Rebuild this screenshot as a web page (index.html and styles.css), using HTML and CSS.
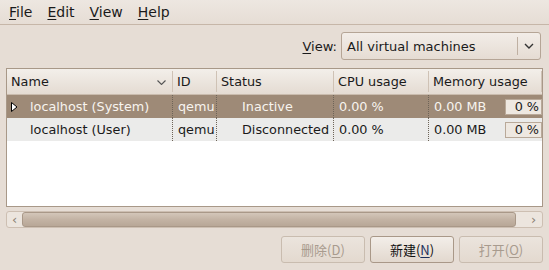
FILE: index.html
```html
<!DOCTYPE html>
<html lang="en">
<head>
    <meta charset="UTF-8">
    <title>Virtual Machine Manager</title>
    <link rel="stylesheet" href="styles.css">
</head>
<body>

    <div class="menubar">
        <span class="menu"><u>F</u>ile</span>
        <span class="menu"><u>E</u>dit</span>
        <span class="menu"><u>V</u>iew</span>
        <span class="menu"><u>H</u>elp</span>
    </div>

    <div class="view-row">
        <span class="view-label"><u>V</u>iew:</span>
        <div class="combo">
            <span class="combo-text">All virtual machines</span>
            <span class="combo-sep"></span>
            <svg class="combo-arrow" width="10" height="6" viewBox="0 0 10 6"><polyline points="1,1 5,5 9,1" fill="none" stroke="#333" stroke-width="1.4"/></svg>
        </div>
    </div>

    <div class="tree">
        <div class="row header">
            <div class="cell hname">Name
                <svg class="sort" width="9" height="5" viewBox="0 0 9 5"><polyline points="0.5,0.5 4.5,4.5 8.5,0.5" fill="none" stroke="#555" stroke-width="1.1"/></svg>
            </div>
            <div class="cell hcol">ID</div>
            <div class="cell hcol">Status</div>
            <div class="cell hcol">CPU usage</div>
            <div class="cell hcol last">Memory usage</div>
        </div>

        <div class="row item selected">
            <div class="cell name">
                <svg class="expander" width="7" height="10" viewBox="0 0 7 10"><polygon points="0.5,0.5 6,5 0.5,9.5" fill="#fff" stroke="#000" stroke-width="1"/></svg>
                localhost (System)
            </div>
            <div class="cell grid">qemu</div>
            <div class="cell grid status">Inactive</div>
            <div class="cell grid">0.00 %</div>
            <div class="cell grid mem">0.00 MB <span class="bar">0 %</span></div>
        </div>

        <div class="row item alt">
            <div class="cell name">localhost (User)</div>
            <div class="cell grid">qemu</div>
            <div class="cell grid status">Disconnected</div>
            <div class="cell grid">0.00 %</div>
            <div class="cell grid mem">0.00 MB <span class="bar">0 %</span></div>
        </div>

        <div class="empty"></div>
    </div>

    <div class="hscroll">
        <span class="arrow">&lsaquo;</span>
        <div class="thumb"></div>
        <span class="arrow right">&rsaquo;</span>
    </div>

    <div class="buttons">
        <button class="btn" disabled>删除(<u>D</u>)</button>
        <button class="btn active">新建(<u>N</u>)</button>
        <button class="btn" disabled>打开(<u>O</u>)</button>
    </div>

</body>
</html>
```

FILE: styles.css
```css
body {
    font-family: 'DejaVu Sans', 'Noto Sans CJK SC', sans-serif;
    font-size: 12.8px;
    margin: 0;
    padding: 0;
    background-color: #e6ddd5;
    color: #1a1a1a;
    width: 549px;
    height: 270px;
    overflow: hidden;
}

u {
    text-decoration-thickness: 1px;
    text-underline-offset: 2px;
}

.menubar {
    display: flex;
    height: 24px;
    align-items: center;
    padding-left: 9px;
    gap: 15px;
    background: linear-gradient(#ede7e1, #e6ddd5);
    border-bottom: 1px solid #c6b6a8;
    font-size: 14px;
}

.view-row {
    display: flex;
    justify-content: flex-end;
    align-items: center;
    margin-top: 7px;
    padding-right: 8px;
    gap: 4px;
}

.view-label {
    font-size: 13px;
}

.combo {
    display: flex;
    align-items: center;
    width: 198px;
    height: 26px;
    border: 1px solid #b5a596;
    border-radius: 3px;
    background: linear-gradient(#f2ede8, #e5dcd3);
    font-size: 13px;
}

.combo-text {
    flex: 1;
    padding-left: 5px;
}

.combo-sep {
    width: 1px;
    height: 18px;
    background-color: #bfb0a2;
}

.combo-arrow {
    margin: 0 6px 0 6px;
}

.tree {
    margin: 8px 6px 0 6px;
    height: 137px;
    border: 1px solid #a89888;
    background-color: #ffffff;
    display: flex;
    flex-direction: column;
}

.row {
    display: grid;
    grid-template-columns: 165px 44px 117px 95px 1fr;
}

.header {
    height: 25px;
    background: linear-gradient(#f3efea, #e4dbd2);
    border-bottom: 1px solid #c9bbad;
}

.cell {
    display: flex;
    align-items: center;
    white-space: nowrap;
    overflow: hidden;
}

.hname {
    padding-left: 4px;
    position: relative;
}

.sort {
    position: absolute;
    right: 6px;
    top: 11px;
}

.hcol {
    border-left: 1px solid #cfc2b5;
    margin: 2px 0;
    padding-left: 4px;
}

.hcol.last {
    border-right: 1px solid #cfc2b5;
}

.item {
    height: 23px;
}

.selected {
    background-color: #9e8a77;
    color: #f8f4ef;
}

.alt {
    background-color: #ebebea;
}

.name {
    padding-left: 23px;
    position: relative;
}

.expander {
    position: absolute;
    left: 4px;
    top: 7px;
}

.grid {
    border-left: 1px dotted #6e6458;
    padding-left: 5px;
}

.status {
    padding-left: 25px;
}

.mem {
    justify-content: space-between;
}

.bar {
    width: 33px;
    height: 14px;
    line-height: 14px;
    border: 1px solid #b9a999;
    background-color: #eee8e1;
    color: #1a1a1a;
    text-align: right;
    padding-right: 2px;
}

.empty {
    flex: 1;
}

.hscroll {
    display: flex;
    align-items: center;
    margin: 4px 6px 0 6px;
    height: 15px;
    border: 1px solid #cdbfb2;
    border-radius: 3px;
    background-color: #ece5de;
}

.arrow {
    width: 15px;
    text-align: center;
    color: #8a7f74;
    font-size: 13px;
    line-height: 15px;
}

.arrow.right {
    width: 17px;
    margin-left: 9px;
}

.thumb {
    flex: 1;
    height: 15px;
    border-radius: 3px;
    background: linear-gradient(#d3c6b9, #c3b3a4 50%, #b8a797);
    border: 1px solid #a99888;
    box-sizing: border-box;
}

.buttons {
    display: flex;
    justify-content: flex-end;
    gap: 5px;
    margin: 8px 6px 0 0;
}

.btn {
    width: 84px;
    height: 27px;
    font-family: 'Noto Sans CJK SC', 'DejaVu Sans', sans-serif;
    font-size: 13px;
    border: 1px solid #c9bcaf;
    border-radius: 3px;
    background: linear-gradient(#ebe4dd, #e3d9cf);
    color: #a89b8e;
    padding: 0;
}

.btn.active {
    border-color: #a99888;
    background: linear-gradient(#f3eee9, #e2d8ce);
    color: #111111;
}

.btn.active u {
    color: #1b2f5a;
}
```
